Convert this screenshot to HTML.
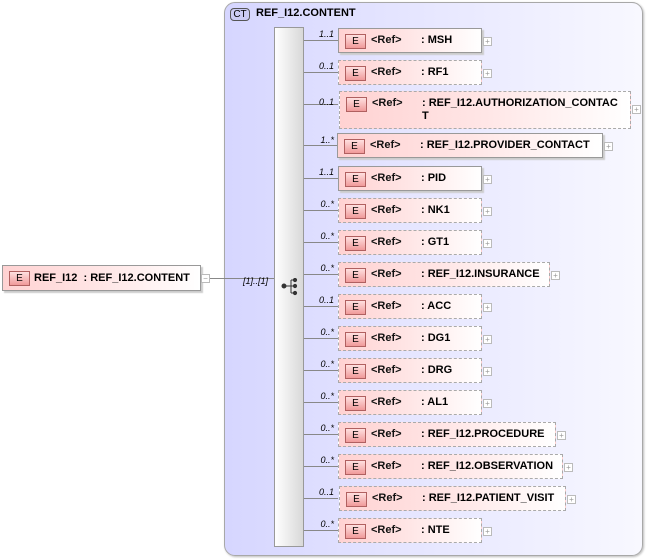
<!DOCTYPE html>
<html><head><meta charset="utf-8"><style>
*{margin:0;padding:0;box-sizing:border-box}
body{width:648px;height:560px;background:#fff;position:relative;overflow:hidden;font-family:"Liberation Sans",Arial,sans-serif;font-size:11px;color:#000}
.a{position:absolute}
.ct{left:224px;top:2px;width:419px;height:554px;border:1px solid #a8a8a8;border-radius:11px;background:linear-gradient(90deg,#d6d6ff 0%,#e4e4ff 40%,#f8f8ff 100%);box-shadow:1px 1px 2px #bbb}
.ctb{left:230px;top:8px;width:20px;height:13px;border:1px solid #555;border-radius:4px;background:#ccccf4;font-size:10px;text-align:center;line-height:11px}
.seq{left:274px;top:27px;width:30px;height:520px;border:1px solid #999;background:linear-gradient(90deg,#fff,#d8d8d8);}
.box{position:absolute;left:338px;background:linear-gradient(90deg,#ffd2d2 0%,#ffe6e6 50%,#fff 100%);border:1px solid #aaa}
.box.s{border:1px solid #999;box-shadow:2px 2px 1px #ccc}
.box.d{border:1px dashed #aaa}
.e{position:absolute;left:6px;top:5px;width:21px;height:15px;border:1px solid #b06060;background:linear-gradient(#ffe0e0,#f09a9a);font-size:10px;text-align:center;line-height:13px}
.r{position:absolute;left:32px;top:5px;font-size:11px;font-weight:bold;color:#111}
.n{position:absolute;left:82px;top:5px;font-weight:bold;font-size:11px;line-height:13px}
.p{position:absolute;width:9px;height:9px;border:1px solid #bbb;background:#fff;font-size:8px;line-height:7px;text-align:center;color:#999}
.ln{position:absolute;left:304px;width:34px;height:1px;background:#888}
.c{position:absolute;width:30px;text-align:right;left:304px;font-size:9px;font-style:italic}
</style></head><body>
<div class="a ct"></div>
<div class="a ctb">CT</div>
<div class="a" style="left:256px;top:7px;font-weight:bold">REF_I12.CONTENT</div>
<div class="a seq"></div>
<svg class="a" style="left:281px;top:278px" width="18" height="18" viewBox="0 0 18 18"><g fill="#333" stroke="#333"><circle cx="3" cy="8" r="2"/><line x1="3" y1="8" x2="10" y2="8"/><line x1="10" y1="2" x2="10" y2="15"/><line x1="10" y1="2" x2="14" y2="2"/><line x1="10" y1="8" x2="14" y2="8"/><line x1="10" y1="15" x2="14" y2="15"/><circle cx="14" cy="2" r="1.6"/><circle cx="14" cy="8" r="1.6"/><circle cx="14" cy="15" r="1.6"/></g></svg>

<div class="box s" style="left:2px;top:265px;width:199px;height:26px"><div class="e">E</div><div class="n" style="left:31px;top:6px">REF_I12&nbsp; : REF_I12.CONTENT</div></div>
<div class="p" style="left:201px;top:274px">−</div>
<div class="a" style="left:210px;top:278px;width:64px;height:1px;background:#888"></div>
<div class="a" style="left:243px;top:276px;font-size:9px;font-style:italic">[1]..[1]</div>

<div class="ln" style="top:40px"></div><div class="c" style="top:29px">1..1</div>
<div class="box s" style="top:28px;width:144px;height:25px"><div class="e">E</div><div class="r">&lt;Ref&gt;</div><div class="n">: MSH</div></div><div class="p" style="left:483px;top:37px">+</div>

<div class="ln" style="top:72px"></div><div class="c" style="top:61px">0..1</div>
<div class="box d" style="top:60px;width:144px;height:25px"><div class="e">E</div><div class="r">&lt;Ref&gt;</div><div class="n">: RF1</div></div><div class="p" style="left:483px;top:69px">+</div>

<div class="ln" style="top:104px"></div><div class="c" style="top:97px">0..1</div>
<div class="box d" style="top:91px;left:339px;width:292px;height:38px"><div class="e">E</div><div class="r">&lt;Ref&gt;</div><div class="n">: REF_I12.AUTHORIZATION_CONTAC<br>T</div></div><div class="p" style="left:632px;top:105px">+</div>

<div class="ln" style="top:145px"></div><div class="c" style="top:135px">1..*</div>
<div class="box s" style="top:133px;left:337px;width:266px;height:25px"><div class="e">E</div><div class="r">&lt;Ref&gt;</div><div class="n">: REF_I12.PROVIDER_CONTACT</div></div><div class="p" style="left:604px;top:142px">+</div>

<div class="ln" style="top:178px"></div><div class="c" style="top:167px">1..1</div>
<div class="box s" style="top:166px;width:144px;height:25px"><div class="e">E</div><div class="r">&lt;Ref&gt;</div><div class="n">: PID</div></div><div class="p" style="left:483px;top:175px">+</div>

<div class="ln" style="top:210px"></div><div class="c" style="top:199px">0..*</div>
<div class="box d" style="top:198px;width:144px;height:25px"><div class="e">E</div><div class="r">&lt;Ref&gt;</div><div class="n">: NK1</div></div><div class="p" style="left:483px;top:207px">+</div>

<div class="ln" style="top:242px"></div><div class="c" style="top:231px">0..*</div>
<div class="box d" style="top:230px;width:144px;height:25px"><div class="e">E</div><div class="r">&lt;Ref&gt;</div><div class="n">: GT1</div></div><div class="p" style="left:483px;top:239px">+</div>

<div class="ln" style="top:274px"></div><div class="c" style="top:263px">0..*</div>
<div class="box d" style="top:262px;width:212px;height:25px"><div class="e">E</div><div class="r">&lt;Ref&gt;</div><div class="n">: REF_I12.INSURANCE</div></div><div class="p" style="left:551px;top:271px">+</div>

<div class="ln" style="top:306px"></div><div class="c" style="top:295px">0..1</div>
<div class="box d" style="top:294px;width:144px;height:25px"><div class="e">E</div><div class="r">&lt;Ref&gt;</div><div class="n">: ACC</div></div><div class="p" style="left:483px;top:303px">+</div>

<div class="ln" style="top:338px"></div><div class="c" style="top:327px">0..*</div>
<div class="box d" style="top:326px;width:144px;height:25px"><div class="e">E</div><div class="r">&lt;Ref&gt;</div><div class="n">: DG1</div></div><div class="p" style="left:483px;top:335px">+</div>

<div class="ln" style="top:370px"></div><div class="c" style="top:359px">0..*</div>
<div class="box d" style="top:358px;width:144px;height:25px"><div class="e">E</div><div class="r">&lt;Ref&gt;</div><div class="n">: DRG</div></div><div class="p" style="left:483px;top:367px">+</div>

<div class="ln" style="top:402px"></div><div class="c" style="top:391px">0..*</div>
<div class="box d" style="top:390px;width:144px;height:25px"><div class="e">E</div><div class="r">&lt;Ref&gt;</div><div class="n">: AL1</div></div><div class="p" style="left:483px;top:399px">+</div>

<div class="ln" style="top:434px"></div><div class="c" style="top:423px">0..*</div>
<div class="box d" style="top:422px;width:218px;height:25px"><div class="e">E</div><div class="r">&lt;Ref&gt;</div><div class="n">: REF_I12.PROCEDURE</div></div><div class="p" style="left:557px;top:431px">+</div>

<div class="ln" style="top:466px"></div><div class="c" style="top:455px">0..*</div>
<div class="box d" style="top:454px;width:225px;height:25px"><div class="e">E</div><div class="r">&lt;Ref&gt;</div><div class="n">: REF_I12.OBSERVATION</div></div><div class="p" style="left:564px;top:463px">+</div>

<div class="ln" style="top:498px"></div><div class="c" style="top:487px">0..1</div>
<div class="box d" style="top:486px;left:339px;width:227px;height:25px"><div class="e">E</div><div class="r">&lt;Ref&gt;</div><div class="n">: REF_I12.PATIENT_VISIT</div></div><div class="p" style="left:567px;top:495px">+</div>

<div class="ln" style="top:530px"></div><div class="c" style="top:519px">0..*</div>
<div class="box d" style="top:518px;width:144px;height:25px"><div class="e">E</div><div class="r">&lt;Ref&gt;</div><div class="n">: NTE</div></div><div class="p" style="left:483px;top:527px">+</div>
</body></html>
